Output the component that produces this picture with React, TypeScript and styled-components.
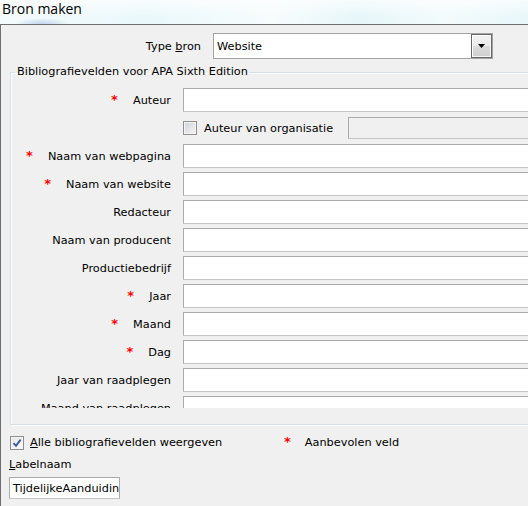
import React from "react"
import styled, {createGlobalStyle} from "styled-components"

const GlobalStyle = createGlobalStyle`
  html, body {
    margin: 0;
    padding: 0;
    background: #f0f0f0;
  }
  body {
    font-family: "DejaVu Sans", Verdana, sans-serif;
    font-size: 11.3px;
    color: #000;
  }
`

const StyledWindow = styled.div`
  width: 528px;
  height: 506px;
  overflow: hidden;
  display: flex;
  flex-direction: column;
`

const StyledTitleBar = styled.div`
  flex: none;
  height: 24px;
  padding-left: 2px;
  font-family: "Open Sans", "DejaVu Sans", sans-serif;
  font-size: 14px;
  line-height: 17px;
  color: #000;
  background:
    radial-gradient(ellipse 28px 6px at 42px 24px, rgba(150, 180, 225, 0.55), rgba(150, 180, 225, 0)),
    linear-gradient(180deg, rgba(255, 255, 255, 0.7), rgba(255, 255, 255, 0) 70%),
    linear-gradient(90deg, #f4fbfc 0%, #eaf8fb 28%, #f7fcfd 52%, #e6f6f9 68%, #f3fbfc 84%, #e8f7fa 100%);
`

const StyledFrame = styled.div`
  flex: 1;
  display: flex;
  flex-direction: column;
  align-items: flex-start;
  border-top: 1px solid #6f6f6f;
  border-left: 1px solid #6f6f6f;
  background: #f0f0f0;
`

const StyledTypeRow = styled.div`
  display: flex;
  align-items: center;
  gap: 12px;
  margin-top: 8px;
`

const StyledTypeLabel = styled.span`
  width: 200px;
  text-align: right;
`

const StyledCombo = styled.div`
  width: 280px;
  height: 26px;
  box-sizing: border-box;
  display: flex;
  align-items: center;
  border: 1px solid #a3a3a3;
  background: #fff;
`

const StyledComboText = styled.span`
  flex: 1;
  padding-left: 3px;
`

const StyledComboButton = styled.div`
  width: 21px;
  height: 24px;
  box-sizing: border-box;
  display: flex;
  align-items: center;
  justify-content: center;
  border: 1px solid #6a6a6a;
  box-shadow: inset 1px 1px 0 #fff, inset -1px -1px 0 #f4f4f4;
  background: linear-gradient(180deg, #f2f2f2 0%, #ebebeb 48%, #dcdcdc 52%, #cfcfcf 100%);
`

const StyledGroup = styled.fieldset`
  margin: 6px 0 0 9px;
  padding: 0 0 16px 0;
  width: 600px;
  min-width: 0;
  box-sizing: border-box;
  border: 1px solid #d5dfe5;
  box-shadow: inset 1px 1px 0 #fff, 1px 1px 0 #fff;
`

const StyledLegend = styled.legend`
  margin-left: 4px;
  padding: 0 2px;
  line-height: 14px;
`

const StyledScroll = styled.div`
  height: 329px;
  box-sizing: border-box;
  padding-top: 9px;
  overflow: hidden;
  display: grid;
  grid-template-columns: 160px 1fr;
  grid-auto-rows: 24px;
  column-gap: 12px;
  row-gap: 4px;
  align-content: start;
`

const StyledFieldLabel = styled.div`
  display: flex;
  align-items: center;
  justify-content: flex-end;
  gap: 15px;
  white-space: nowrap;
`

const StyledStar = styled.span`
  color: #ff0000;
  font-weight: bold;
  font-size: 13px;
  line-height: 13px;
  margin-top: -2px;
`

const StyledTextBox = styled.div<{$width?: number, $height?: number, $disabled?: boolean}>`
  box-sizing: border-box;
  width: ${p => p.$width ? `${p.$width}px` : "100%"};
  height: ${p => p.$height || 24}px;
  border: 1px solid #ababab;
  border-bottom-color: #c4c4c4;
  background: ${p => p.$disabled ? "#f0f0f0" : "#fff"};
  padding-left: 3px;
  display: flex;
  align-items: center;
  overflow: hidden;
  white-space: nowrap;
`

const StyledOrgRow = styled.div`
  grid-column: 2;
  display: flex;
  align-items: center;
`

const StyledOrgText = styled.span`
  flex: none;
  width: 151px;
  padding-left: 7px;
  box-sizing: border-box;
  white-space: nowrap;
`

const StyledCheck = styled.span<{$checked?: boolean}>`
  flex: none;
  width: 14px;
  height: 14px;
  box-sizing: border-box;
  display: inline-flex;
  align-items: center;
  justify-content: center;
  border: 1px solid #8f8f8f;
  box-shadow: inset 0 0 0 1px #f4f4f4;
  background: ${p => p.$checked
    ? "linear-gradient(135deg, #e4e4e4, #fdfdfd)"
    : "linear-gradient(135deg, #cfd2d6, #f6f6f6)"};
`

const StyledBottomRow = styled.div`
  display: flex;
  align-items: center;
  margin-top: 10px;
  padding-left: 9px;
  height: 15px;
`

const StyledShowAll = styled.label`
  width: 274px;
  display: flex;
  align-items: center;
  gap: 6px;
`

const StyledLegendNote = styled.div`
  display: flex;
  align-items: center;
  gap: 14px;
`

const StyledLabelName = styled.div`
  margin-top: 8px;
  padding-left: 8px;
  line-height: 14px;
`

const StyledLabelBox = styled.div`
  margin-top: 5px;
  margin-left: 8px;
`

const fields: {label: string, required?: boolean}[] = [
    {label: "Naam van webpagina", required: true},
    {label: "Naam van website", required: true},
    {label: "Redacteur"},
    {label: "Naam van producent"},
    {label: "Productiebedrijf"},
    {label: "Jaar", required: true},
    {label: "Maand", required: true},
    {label: "Dag", required: true},
    {label: "Jaar van raadplegen"},
    {label: "Maand van raadplegen"},
]

const Arrow = () => (
    <svg width="7" height="4" viewBox="0 0 7 4">
        <path d="M0 0H7L3.5 4Z" fill="#000"/>
    </svg>
)

const CheckMark = () => (
    <svg width="10" height="10" viewBox="0 0 10 10">
        <path d="M1.5 5.2L4 7.8L8.6 1.6" fill="none" stroke="#3a5a9c" strokeWidth="1.9"/>
    </svg>
)

const FieldLabel: React.FC<{label: string, required?: boolean}> = ({label, required}) => (
    <StyledFieldLabel>
        {required && <StyledStar>*</StyledStar>}
        <span>{label}</span>
    </StyledFieldLabel>
)

const App: React.FC = () => {
    return (
        <StyledWindow>
            <GlobalStyle/>
            <StyledTitleBar>Bron maken</StyledTitleBar>
            <StyledFrame>
                <StyledTypeRow>
                    <StyledTypeLabel>Type <u>b</u>ron</StyledTypeLabel>
                    <StyledCombo>
                        <StyledComboText>Website</StyledComboText>
                        <StyledComboButton>
                            <Arrow/>
                        </StyledComboButton>
                    </StyledCombo>
                </StyledTypeRow>
                <StyledGroup>
                    <StyledLegend>Bibliografievelden voor APA Sixth Edition</StyledLegend>
                    <StyledScroll>
                        <FieldLabel label="Auteur" required/>
                        <StyledTextBox/>
                        <StyledOrgRow>
                            <StyledCheck/>
                            <StyledOrgText>Auteur van organisatie</StyledOrgText>
                            <StyledTextBox $height={22} $disabled/>
                        </StyledOrgRow>
                        {
                            fields.map(f => (
                                <React.Fragment key={f.label}>
                                    <FieldLabel label={f.label} required={f.required}/>
                                    <StyledTextBox/>
                                </React.Fragment>
                            ))
                        }
                    </StyledScroll>
                </StyledGroup>
                <StyledBottomRow>
                    <StyledShowAll>
                        <StyledCheck $checked>
                            <CheckMark/>
                        </StyledCheck>
                        <span><u>A</u>lle bibliografievelden weergeven</span>
                    </StyledShowAll>
                    <StyledLegendNote>
                        <StyledStar>*</StyledStar>
                        <span>Aanbevolen veld</span>
                    </StyledLegendNote>
                </StyledBottomRow>
                <StyledLabelName><u>L</u>abelnaam</StyledLabelName>
                <StyledLabelBox>
                    <StyledTextBox $width={111} $height={22}>TijdelijkeAanduiding</StyledTextBox>
                </StyledLabelBox>
            </StyledFrame>
        </StyledWindow>
    )
}

export default App
